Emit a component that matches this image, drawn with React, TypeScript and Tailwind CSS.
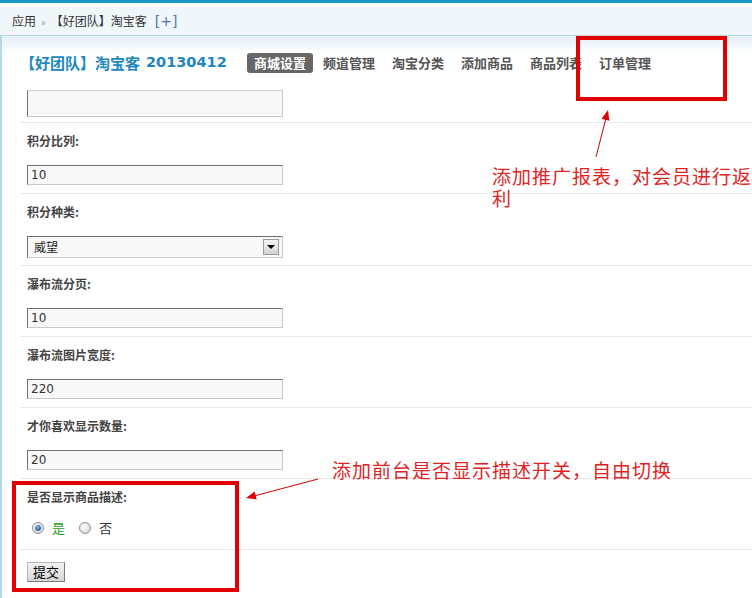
import React from "react";

const inputCls =
  "block w-[256px] h-[20px] bg-[#f8f8f8] border border-t-[#6f6f6f] border-l-[#6f6f6f] border-r-[#c9c9c9] border-b-[#c9c9c9] pl-[3px] text-[12px] leading-[18px] text-[#333] font-['DejaVu_Sans',sans-serif] outline-none";

function Label({ children }: { children: React.ReactNode }) {
  return <div className="h-[20px] leading-[20px] text-[12px] font-bold text-[#444]">{children}</div>;
}

function Row({ children, className = "" }: { children: React.ReactNode; className?: string }) {
  return (
    <div className={"border-t border-dotted border-[#d6d6d6] pl-[6px] " + className}>{children}</div>
  );
}

function Radio({ checked }: { checked?: boolean }) {
  return (
    <span className="flex w-[12px] h-[12px] items-center justify-center rounded-full border border-[#8f8f8f] bg-[radial-gradient(circle_at_40%_35%,#ffffff,#cfcfcf)]">
      {checked && (
        <span className="block w-[6px] h-[6px] rounded-full bg-[radial-gradient(circle_at_40%_35%,#7fb6e0,#173f66)]" />
      )}
    </span>
  );
}

export default function App() {
  const tabs = ["商城设置", "频道管理", "淘宝分类", "添加商品", "商品列表", "订单管理"];
  return (
    <div className="relative w-[752px] h-[598px] overflow-hidden bg-white font-['Noto_Sans_CJK_SC',sans-serif]">
      {/* header */}
      <div className="h-[3px] bg-[#1a97c8]" />
      <div className="h-[4px] bg-white" />
      <div className="h-[29px] bg-[#eff7fb] border-b border-[#bcd2de] flex items-center pl-[12px] text-[12px] text-[#333]">
        <span>应用</span>
        <span className="mx-[5px] text-[10px] text-[#999]">»</span>
        <span>【好团队】淘宝客</span>
        <span className="ml-[8px] text-[14px] text-[#4c79ad] font-['DejaVu_Sans',sans-serif]">[+]</span>
      </div>

      {/* main */}
      <div className="h-[562px] border-l-2 border-[#b3d9ea] bg-[linear-gradient(to_bottom,#e4f0f8,#ffffff_18px)]">
        <div className="pt-[17px] pl-[18px] flex items-center">
          <div className="w-[227px] h-[20px] flex items-center text-[15px] font-bold text-[#1c87c1] whitespace-nowrap">
            <span>【好团队】淘宝客</span>
            <span className="ml-[6px] font-['DejaVu_Sans',sans-serif] text-[14.5px]">20130412</span>
          </div>
          <div className="flex gap-[3px]">
            {tabs.map((t, i) => (
              <div
                key={t}
                className={
                  "w-[66px] h-[20px] leading-[20px] text-center text-[13px] font-bold rounded-[3px] " +
                  (i === 0 ? "bg-[#676767] text-white" : "text-[#555]")
                }
              >
                {t}
              </div>
            ))}
          </div>
        </div>

        <div className="mt-[17px] ml-[19px]">
          <div className="pl-[6px] pb-[5px]">
            <div className="w-[256px] h-[27px] bg-[#f8f8f8] border border-t-[#d0d0d0] border-l-[#6f6f6f] border-r-[#c9c9c9] border-b-[#c9c9c9]" />
          </div>

          <Row className="pt-[8px] pb-[8px]">
            <Label>积分比列:</Label>
            <div className="mt-[14px]">
              <input className={inputCls} readOnly defaultValue="10" />
            </div>
          </Row>

          <Row className="pt-[8px] pb-[7px]">
            <Label>积分种类:</Label>
            <div className="mt-[14px] w-[256px] h-[22px] bg-[#f8f8f8] border border-t-[#6f6f6f] border-l-[#6f6f6f] border-r-[#c9c9c9] border-b-[#c9c9c9] flex items-center justify-between pl-[6px] pr-[3px]">
              <span className="text-[12px] text-[#222]">威望</span>
              <span className="flex w-[16px] h-[16px] items-center justify-center border border-[#9a9a9a] bg-[linear-gradient(to_bottom,#f6f6f6,#d2d2d2)]">
                <span className="block w-0 h-0 border-l-[4px] border-r-[4px] border-t-[4px] border-l-transparent border-r-transparent border-t-black" />
              </span>
            </div>
          </Row>

          <Row className="pt-[8px] pb-[8px]">
            <Label>瀑布流分页:</Label>
            <div className="mt-[14px]">
              <input className={inputCls} readOnly defaultValue="10" />
            </div>
          </Row>

          <Row className="pt-[8px] pb-[8px]">
            <Label>瀑布流图片宽度:</Label>
            <div className="mt-[14px]">
              <input className={inputCls} readOnly defaultValue="220" />
            </div>
          </Row>

          <Row className="pt-[8px] pb-[8px]">
            <Label>才你喜欢显示数量:</Label>
            <div className="mt-[14px]">
              <input className={inputCls} readOnly defaultValue="20" />
            </div>
          </Row>

          <Row className="pt-[8px] pb-[11px]">
            <Label>是否显示商品描述:</Label>
            <div className="mt-[11px] h-[20px] flex items-center pl-[5px] text-[13px]">
              <Radio checked />
              <span className="ml-[8px] text-[#24a024]">是</span>
              <span className="ml-[14px]">
                <Radio />
              </span>
              <span className="ml-[8px] text-[#333]">否</span>
            </div>
          </Row>

          <Row className="pt-[8px]">
            <button className="h-[20px] px-[5px] text-[13px] leading-[18px] text-black bg-[linear-gradient(to_bottom,#f2f2f2,#d6d6d6)] border border-[#7a7a7a] border-t-[#b5b5b5] border-l-[#b5b5b5]">
              提交
            </button>
          </Row>
        </div>
      </div>

      {/* annotations */}
      <div className="absolute left-[576px] top-[36px] w-[151px] h-[65px] border-[4px] border-[#e00000]" />
      <div className="absolute left-[12px] top-[481px] w-[227px] h-[111px] border-[4px] border-[#e00000]" />
      <div className="absolute left-[492px] top-[165px] text-[19px] leading-[22px] tracking-[1px] text-[#e02424] whitespace-nowrap">
        添加推广报表，对会员进行返
        <br />
        利
      </div>
      <div className="absolute left-[332px] top-[459px] text-[19px] leading-[22px] tracking-[1px] text-[#e02424] whitespace-nowrap">
        添加前台是否显示描述开关，自由切换
      </div>
      <svg className="absolute left-0 top-0 pointer-events-none" width="752" height="598" viewBox="0 0 752 598">
        <line x1="596" y1="157" x2="606" y2="118" stroke="#d40000" strokeWidth="1" />
        <polygon points="608,110 609.4,120.7 601.6,118.7" fill="#e00000" />
        <line x1="318" y1="479" x2="254" y2="496" stroke="#d40000" strokeWidth="1" />
        <polygon points="246,498 256.7,499.4 254.7,491.6" fill="#e00000" />
      </svg>
    </div>
  );
}
